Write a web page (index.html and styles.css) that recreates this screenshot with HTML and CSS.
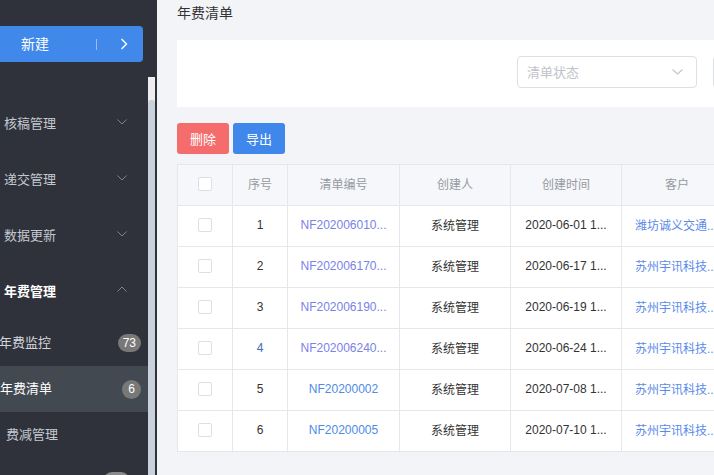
FILE: index.html
```html
<!DOCTYPE html>
<html lang="zh-CN">
<head>
<meta charset="utf-8">
<title>年费清单</title>
<link rel="stylesheet" href="styles.css">
</head>
<body>
<div class="app">
  <aside class="sidebar">
    <div class="side-top">
      <button class="new-btn">
        <span class="new-label">新建</span>
        <span class="new-div"></span>
        <svg class="new-arrow" width="8" height="12" viewBox="0 0 8 12"><path d="M1.5 1 L6.5 6 L1.5 11" fill="none" stroke="#fff" stroke-width="1.4"/></svg>
      </button>
    </div>
    <div class="side-scroll">
      <ul class="menu">
        <li class="menu-head"><span>核稿管理</span><svg class="chev" width="10" height="6" viewBox="0 0 10 6"><path d="M0.5 0.5 L5 5 L9.5 0.5" fill="none" stroke="#7e838c" stroke-width="1"/></svg></li>
        <li class="menu-head"><span>递交管理</span><svg class="chev" width="10" height="6" viewBox="0 0 10 6"><path d="M0.5 0.5 L5 5 L9.5 0.5" fill="none" stroke="#7e838c" stroke-width="1"/></svg></li>
        <li class="menu-head"><span>数据更新</span><svg class="chev" width="10" height="6" viewBox="0 0 10 6"><path d="M0.5 0.5 L5 5 L9.5 0.5" fill="none" stroke="#7e838c" stroke-width="1"/></svg></li>
        <li class="menu-head open"><span>年费管理</span><svg class="chev" width="10" height="6" viewBox="0 0 10 6"><path d="M0.5 5.5 L5 1 L9.5 5.5" fill="none" stroke="#7e838c" stroke-width="1"/></svg></li>
        <li class="menu-sub first"><span>年费监控</span><span class="badge">73</span></li>
        <li class="menu-sub active"><span>年费清单</span><span class="badge round">6</span></li>
        <li class="menu-sub indent"><span>费减管理</span></li>
        <li class="menu-sub indent"><span></span><span class="badge wide blank"></span></li>
      </ul>
      <div class="scrollbar"><div class="thumb"></div></div>
    </div>
  </aside>
  <main class="main">
    <div class="content">
      <h1 class="title">年费清单</h1>
      <div class="filters">
        <div class="select"><span class="ph">清单状态</span><svg width="11" height="6" viewBox="0 0 11 6"><path d="M0.5 0.5 L5.5 5 L10.5 0.5" fill="none" stroke="#c0c4cc" stroke-width="1.1"/></svg></div>
        <div class="select"></div>
      </div>
      <div class="actions">
        <button class="btn danger">删除</button>
        <button class="btn primary">导出</button>
      </div>
      <table class="grid">
        <colgroup>
          <col class="c-check"><col class="c-idx"><col class="c-no"><col class="c-w"><col class="c-w"><col class="c-w"><col class="c-w"><col class="c-w">
        </colgroup>
        <thead>
          <tr><th><span class="cb"></span></th><th>序号</th><th>清单编号</th><th>创建人</th><th>创建时间</th><th>客户</th><th>金额</th><th>状态</th></tr>
        </thead>
        <tbody>
          <tr><td><span class="cb"></span></td><td>1</td><td class="lnk v">NF202006010...</td><td>系统管理</td><td>2020-06-01 1...</td><td class="lnk c">潍坊诚义交通...</td><td>1200.00</td><td>已完成</td></tr>
          <tr><td><span class="cb"></span></td><td>2</td><td class="lnk v">NF202006170...</td><td>系统管理</td><td>2020-06-17 1...</td><td class="lnk c">苏州宇讯科技...</td><td>900.00</td><td>已完成</td></tr>
          <tr><td><span class="cb"></span></td><td>3</td><td class="lnk v">NF202006190...</td><td>系统管理</td><td>2020-06-19 1...</td><td class="lnk c">苏州宇讯科技...</td><td>900.00</td><td>已完成</td></tr>
          <tr><td><span class="cb"></span></td><td class="blue">4</td><td class="lnk v">NF202006240...</td><td>系统管理</td><td>2020-06-24 1...</td><td class="lnk c">苏州宇讯科技...</td><td>900.00</td><td>已完成</td></tr>
          <tr><td><span class="cb"></span></td><td>5</td><td class="lnk b">NF20200002</td><td>系统管理</td><td>2020-07-08 1...</td><td class="lnk c">苏州宇讯科技...</td><td>900.00</td><td>待缴纳</td></tr>
          <tr><td><span class="cb"></span></td><td>6</td><td class="lnk b">NF20200005</td><td>系统管理</td><td>2020-07-10 1...</td><td class="lnk c">苏州宇讯科技...</td><td>900.00</td><td>待缴纳</td></tr>
        </tbody>
      </table>
    </div>
  </main>
</div>
</body>
</html>
```

FILE: styles.css
```css
* { box-sizing: border-box; }
html, body { margin: 0; padding: 0; height: 100%; }
body {
  font-family: "Liberation Sans", "Noto Sans CJK SC", sans-serif;
  background: #f3f4f8;
  overflow: hidden;
  color: #333;
}
.app { display: flex; height: 475px; }

/* Sidebar */
.sidebar {
  width: 157px;
  flex: none;
  background: #2f323a;
  display: flex;
  flex-direction: column;
  border-right: 2px solid #2f323a;
}
.side-top { height: 77px; padding-top: 26px; }
.new-btn {
  width: 143px;
  height: 36px;
  border: 0;
  padding: 0;
  background: #4089ea;
  border-radius: 0 4px 4px 0;
  display: flex;
  align-items: center;
  color: #fff;
  font-family: inherit;
  cursor: pointer;
}
.new-label { width: 70px; text-align: center; font-size: 14px; line-height: 20px; }
.new-div { width: 1px; height: 11px; background: rgba(255,255,255,0.45); margin-left: 26px; }
.new-arrow { margin-left: 23px; }

.side-scroll { flex: 1; display: flex; min-height: 0; }
.menu {
  list-style: none;
  margin: 0;
  padding: 19px 0 0;
  width: 148px;
  flex: none;
  overflow: hidden;
}
.menu-head {
  height: 56px;
  display: flex;
  align-items: center;
  justify-content: space-between;
  padding: 0 21px 4px 4px;
  font-size: 13px;
  color: #c4c9d1;
}
.menu-head.open { color: #fff; font-weight: bold; }
.menu-head .chev { margin-top: -1px; }
.menu-head.open .chev { margin-top: -2px; }
.menu-sub {
  height: 46px;
  display: flex;
  align-items: center;
  justify-content: space-between;
  padding: 0 7px 0 0;
  font-size: 13px;
  color: #d2d5da;
}
.menu-sub > span:first-child { margin-top: -3px; }
.menu-sub.first { margin-left: -1px; }
.menu-sub.active { background: #434951; color: #fff; }
.menu-sub.indent { padding-left: 6px; padding-right: 18px; color: #c4c9d1; }
.badge {
  height: 18px;
  min-width: 18px;
  padding: 0 5px;
  border-radius: 9px;
  background: #787878;
  color: #fff;
  font-size: 12px;
  line-height: 18px;
  text-align: center;
}
.badge.round { width: 19px; height: 19px; line-height: 19px; padding: 0; border-radius: 50%; }
.badge.wide { background: #8a8a8a; }
.badge.blank { width: 27px; }

.scrollbar {
  width: 7px;
  flex: none;
  background: #eeeeee;
  padding-top: 23px;
  display: flex;
}
.thumb { flex: 1; background: #c9d2da; border-radius: 3px 3px 0 0; }

/* Main */
.main { flex: 1; min-width: 0; overflow: hidden; padding-left: 20px; }
.content { width: 800px; }
.title {
  margin: 0;
  height: 40px;
  font-size: 14px;
  font-weight: normal;
  line-height: 26px;
  color: #333;
}
.filters {
  background: #fff;
  height: 67px;
  display: flex;
  gap: 16px;
  padding: 16px 0 0 340px;
}
.select {
  width: 180px;
  height: 32px;
  border: 1px solid #dcdfe6;
  border-radius: 4px;
  display: flex;
  align-items: center;
  justify-content: space-between;
  padding: 0 13px 1px 9px;
  background: #fff;
}
.ph { font-size: 13px; color: #bfc3cb; }

.actions { display: flex; gap: 4px; margin-top: 16px; }
.btn {
  height: 31px;
  width: 52px;
  border: 0;
  border-radius: 3px;
  color: #fff;
  font-size: 13px;
  font-family: inherit;
  padding: 0;
}
.btn.danger { background: #f56c6c; }
.btn.primary { background: #3f87ea; }

.grid {
  margin-top: 10px;
  border-collapse: collapse;
  table-layout: fixed;
  width: 777px;
  background: #fff;
  font-size: 12px;
}
.c-check, .c-idx { width: 55px; }
.c-no { width: 112px; }
.c-w { width: 111px; }
.grid th, .grid td {
  border: 1px solid #e6e7eb;
  height: 41px;
  padding: 0 8px 3px;
  text-align: center;
  white-space: nowrap;
  overflow: hidden;
  vertical-align: middle;
}
.grid th { background: #f6f7fa; color: #959aa2; font-weight: normal; }
.grid td { color: #333; }
.grid td.blue { color: #3d6fb0; }
.cb {
  display: inline-block;
  width: 14px;
  height: 14px;
  border: 1px solid #dcdfe6;
  border-radius: 2px;
  background: #fff;
  vertical-align: middle;
}
.grid td.lnk.v { color: #7a82e8; }
.grid td.lnk.b { color: #4d8be9; }
.grid td.lnk.c { color: #5b8aea; text-align: left; padding-left: 13px; }
```
